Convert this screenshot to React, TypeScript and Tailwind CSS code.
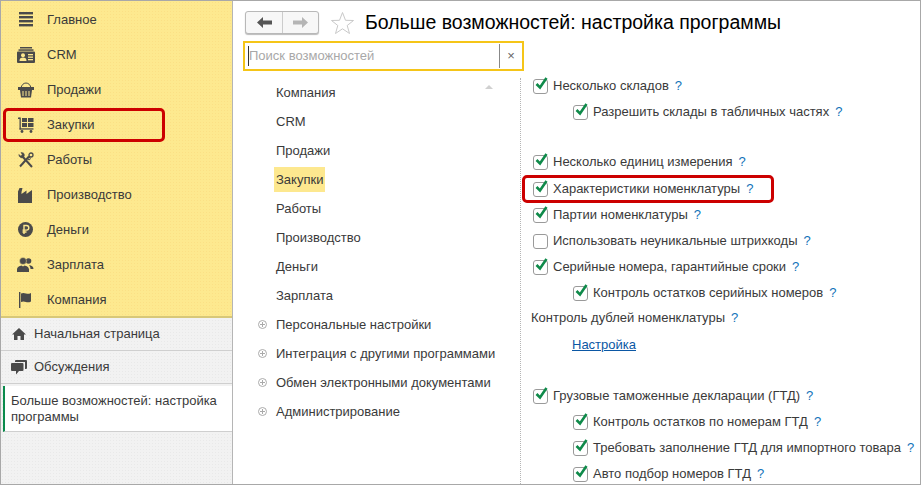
import React from "react";

const ink = "#4a4a4a";
const yellow = "#fde88f";

const MenuIcon = () => (
  <svg width="16" height="15" viewBox="0 0 16 15" fill={ink}>
    <rect x="1" y="0" width="14" height="2.4" />
    <rect x="1" y="4" width="14" height="2.4" />
    <rect x="1" y="8" width="14" height="2.4" />
    <rect x="1" y="12" width="14" height="2.4" />
  </svg>
);

const CrmIcon = () => (
  <svg width="18" height="16" viewBox="0 0 18 16" fill={ink}>
    <rect x="3" y="0" width="12" height="1.5" />
    <rect x="1.5" y="2.3" width="15" height="1.5" />
    <path d="M1 4.5h16a1 1 0 0 1 1 1V15a1 1 0 0 1-1 1H1a1 1 0 0 1-1-1V5.5a1 1 0 0 1 1-1z" />
    <circle cx="6" cy="8.2" r="2" fill={yellow} />
    <path d="M2.5 14c0-2.400 1.400-3.400 3.500-3.400s3.500 1 3.500 3.400z" fill={yellow} />
    <rect x="11" y="7" width="5" height="1.300" fill={yellow} />
    <rect x="11" y="9.500" width="5" height="1.300" fill={yellow} />
    <rect x="11" y="12" width="5" height="1.300" fill={yellow} />
  </svg>
);

const BasketIcon = () => (
  <svg width="16" height="16" viewBox="0 0 16 16" fill="none" stroke={ink}>
    <path d="M3 6C3.500 3 5.500 1 8 1s4.500 2 5 5" strokeWidth="1" />
    <rect x="0.500" y="5.500" width="15" height="2" fill={ink} />
    <path d="M2 8h12l-1 7.500H3z" fill={ink} stroke="none" />
    <path d="M5 9v5M8 9v5M11 9v5" stroke={yellow} />
  </svg>
);

const CartIcon = () => (
  <svg width="16" height="16" viewBox="0 0 16 16" fill={ink}>
    <rect x="0" y="0.500" width="2" height="1.500" />
    <rect x="1.500" y="0.500" width="1.300" height="12" />
    <rect x="4" y="1" width="5" height="4" />
    <rect x="10" y="1" width="5.500" height="4" />
    <rect x="4" y="6" width="5" height="4" />
    <rect x="10" y="6" width="5.500" height="4" />
    <rect x="1.500" y="11.300" width="14" height="1.300" />
    <circle cx="4" cy="14.500" r="1.400" />
    <circle cx="13" cy="14.500" r="1.400" />
  </svg>
);

const ToolsIcon = () => (
  <svg width="16" height="16" viewBox="0 0 16 16" fill="none" stroke={ink}>
    <path d="M4.500 4.500 14 15" strokeWidth="2" />
    <path d="M11 4.500 2 14.500" strokeWidth="2" />
    <path d="M0.800 2.500a3.200 3.200 0 0 0 4.700 3L6.500 3A3 3 0 0 0 3 0.500L4.300 2.800 2.800 4z" fill={ink} strokeWidth="0.500" />
    <circle cx="13" cy="3" r="2" strokeWidth="1.300" />
    <circle cx="11" cy="6.500" r="1.300" strokeWidth="1" />
  </svg>
);

const FactoryIcon = () => (
  <svg width="15" height="16" viewBox="0 0 15 16" fill={ink}>
    <path d="M0 16V4.500L1.500 1H4.500L3.500 5V7L8.500 3.500V7L14 3V16z" />
  </svg>
);

const RubleIcon = () => (
  <svg width="15" height="15" viewBox="0 0 15 15">
    <circle cx="7.500" cy="7.500" r="7.500" fill={ink} />
    <path d="M6 12V3.500h2.500a2.300 2.300 0 0 1 0 4.600H4.500M4.500 10H8.500" fill="none" stroke={yellow} strokeWidth="1.400" />
  </svg>
);

const PeopleIcon = () => (
  <svg width="17" height="15" viewBox="0 0 17 15" fill={ink}>
    <circle cx="11.500" cy="4" r="2.800" />
    <path d="M12 8c2.500.3 4.500 1.500 4.500 4h-3c0-1.500-.5-2.800-1.500-4z" />
    <circle cx="6" cy="4" r="3.500" stroke={yellow} strokeWidth="0.500" />
    <path d="M0 15v-2.500c0-2.500 2.500-3.500 4.500-4l1.500 1 1.500-1c2 .5 4.500 1.500 4.500 4V15z" />
  </svg>
);

const FlagIcon = () => (
  <svg width="13" height="16" viewBox="0 0 13 16" fill={ink}>
    <rect x="0" y="0" width="1.400" height="16" />
    <path d="M2 1.500c2-1 3.500-.5 5 0s3 .5 5-.5v8.500c-2 1-3.500 1-5 .5s-3-1-5 0z" />
  </svg>
);

const HomeIcon = () => (
  <svg width="14" height="12" viewBox="0 0 14 12" fill={ink}>
    <path d="M7 0 14 6.500H12V12H8.500V8h-3v4H2V6.500H0z" />
  </svg>
);

const ChatIcon = () => (
  <svg width="16" height="15" viewBox="0 0 16 15" fill={ink}>
    <path d="M5 0h10a1 1 0 0 1 1 1v7a1 1 0 0 1-1 1h-1V2H4V1a1 1 0 0 1 1-1z" />
    <path d="M1 3h10.500a1 1 0 0 1 1 1v6a1 1 0 0 1-1 1H8l-3 3.500V11H1a1 1 0 0 1-1-1V4a1 1 0 0 1 1-1z" />
  </svg>
);

const Check = ({ checked = true }: { checked?: boolean }) => (
  <span className="relative block h-[15px] w-[15px] shrink-0 rounded-[3px] border border-[#9a9a9a] bg-white">
    {checked && (
      <svg className="absolute -top-[4px] left-0" width="15" height="15" viewBox="0 0 15 15" fill="none">
        <path d="M2.500 8 6 11.500 12.500 2" stroke="#0f8a4a" strokeWidth="2.600" />
      </svg>
    )}
  </span>
);

const Option = ({
  text,
  indent,
  checked,
}: {
  text: string;
  indent?: boolean;
  checked?: boolean;
}) => (
  <div className={`flex h-[26px] items-center ${indent ? "pl-[40px]" : ""}`}>
    <Check checked={checked} />
    <span className="ml-[5px]">{text}</span>
    <span className="ml-[6px] text-[#1273b9]">?</span>
  </div>
);

const mainMenu: [React.ReactNode, string][] = [
  [<MenuIcon />, "Главное"],
  [<CrmIcon />, "CRM"],
  [<BasketIcon />, "Продажи"],
  [<CartIcon />, "Закупки"],
  [<ToolsIcon />, "Работы"],
  [<FactoryIcon />, "Производство"],
  [<RubleIcon />, "Деньги"],
  [<PeopleIcon />, "Зарплата"],
  [<FlagIcon />, "Компания"],
];

const sections = ["Компания", "CRM", "Продажи", "Закупки", "Работы", "Производство", "Деньги", "Зарплата"];
const groups = [
  "Персональные настройки",
  "Интеграция с другими программами",
  "Обмен электронными документами",
  "Администрирование",
];

export default function App() {
  return (
    <div className="relative flex h-[485px] w-[921px] overflow-hidden border border-[#a8a8a8] bg-white font-['Liberation_Sans',Arial,sans-serif] text-[13px] text-[#3a3a3a]">
      {/* sidebar */}
      <div className="flex w-[232px] shrink-0 flex-col border-r border-[#b5b5b5] bg-[#f2f2f2] bg-[radial-gradient(#e9e9e9_0.6px,transparent_0.9px)] bg-[length:3px_3px]">
        <div className="h-[317px] shrink-0 border-b-2 border-[#d8c878] bg-[#fde98f] bg-[radial-gradient(#fbe085_0.6px,transparent_0.9px)] bg-[length:3px_3px] pt-[1px]">
          {mainMenu.map(([icon, label]) => (
            <div key={label} className="flex h-[35px] items-center">
              <span className="flex w-[46px] shrink-0 justify-center pl-[3px]">{icon}</span>
              <span>{label}</span>
            </div>
          ))}
        </div>
        <div className="flex h-[33px] shrink-0 items-center border-b border-[#cfcfcf] pl-[11px]">
          <span className="flex w-[22px]">
            <HomeIcon />
          </span>
          Начальная страница
        </div>
        <div className="flex h-[33px] shrink-0 items-center border-b border-[#cfcfcf] pl-[10px]">
          <span className="flex w-[23px]">
            <ChatIcon />
          </span>
          Обсуждения
        </div>
        <div className="ml-[2px] mt-[2px] flex h-[46px] shrink-0 items-center border-b border-l-[2px] border-b-[#cfcfcf] border-l-[#0a8a4c] bg-white pl-[6px] leading-[16px]">
          Больше возможностей: настройка программы
        </div>
      </div>

      {/* content */}
      <div className="flex min-w-0 flex-1 flex-col">
        <div className="flex h-[40px] shrink-0 items-center pl-[12px] pt-[3px]">
          <div className="flex h-[23px] w-[74px] overflow-hidden rounded-[3px] border border-[#b8b8b8] bg-[#f7f7f7] shadow-[0_1px_1px_#bbb]">
            <span className="flex w-[37px] items-center justify-center border-r border-[#cccccc]">
              <svg width="15" height="11" viewBox="0 0 15 11" fill="#555555">
                <path d="M0 5.500 6 0V3.500H15V7.500H6V11z" />
              </svg>
            </span>
            <span className="flex flex-1 items-center justify-center">
              <svg width="15" height="11" viewBox="0 0 15 11" fill="#b5b5b5">
                <path d="M15 5.500 9 0V3.500H0V7.500H9V11z" />
              </svg>
            </span>
          </div>
          <svg className="ml-[11px]" width="25" height="24" viewBox="0 0 25 24" fill="none" stroke="#c9c9c9">
            <path d="M12.500 1.500 15.500 9.300 23.500 9.500 17.200 14.500 19.500 22.500 12.500 17.800 5.500 22.500 7.800 14.500 1.500 9.500 9.500 9.300z" />
          </svg>
          <span className="ml-[10px] text-[19.500px] text-black">Больше возможностей: настройка программы</span>
        </div>
        <div className="shrink-0 pl-[10px]">
          <div className="flex h-[30px] w-[281px] items-center border-2 border-[#f5c518] pl-[3px]">
            <span className="h-[20px] w-px bg-[#333333]" />
            <span className="text-[#a8a8a8]">Поиск возможностей</span>
            <span className="ml-auto flex h-[24px] w-[23px] items-center justify-center border-l border-[#888888] text-[#666666]">
              ×
            </span>
          </div>
        </div>
        <div className="flex min-h-0 flex-1">
          <div className="w-[287px] shrink-0 pl-[10px] pt-[7px]">
            <div className="relative">
              <span className="absolute right-[27px] top-[7px] h-0 w-0 border-x-[4px] border-b-[4px] border-x-transparent border-b-[#d0d0d0]" />
              {sections.map((s) => (
                <div key={s} className="flex h-[29px] items-center pl-[33px]">
                  <span className={s === "Закупки" ? "-mx-[2px] bg-[#fde88f] px-[2px] py-[3px]" : ""}>{s}</span>
                </div>
              ))}
              {groups.map((g) => (
                <div key={g} className="flex h-[29px] items-center pl-[15px]">
                  <svg className="mr-[9px]" width="9" height="9" viewBox="0 0 9 9" fill="none" stroke="#aaaaaa">
                    <circle cx="4.500" cy="4.500" r="4" />
                    <path d="M2 4.500H7M4.500 2V7" />
                  </svg>
                  {g}
                </div>
              ))}
            </div>
          </div>
          <div className="mt-[7px] min-w-0 flex-1 border-l border-dotted border-[#b5b5b5] pl-[12px]">
            <div className="-mt-[5px]">
              <Option text="Несколько складов" />
              <Option text="Разрешить склады в табличных частях" indent />
              <div className="h-[24px]" />
              <Option text="Несколько единиц измерения" />
              <div className="h-[1px]" />
              <Option text="Характеристики номенклатуры" />
              <Option text="Партии номенклатуры" />
              <Option text="Использовать неуникальные штрихкоды" checked={false} />
              <Option text="Серийные номера, гарантийные сроки" />
              <Option text="Контроль остатков серийных номеров" indent />
              <div className="-ml-[2px] flex h-[24px] items-center">
                Контроль дублей номенклатуры <span className="ml-[6px] text-[#1273b9]">?</span>
              </div>
              <div className="flex h-[28px] items-center pl-[39px] pt-[1px]">
                <span className="text-[#0b57a4] underline">Настройка</span>
              </div>
              <div className="h-[25px]" />
              <Option text="Грузовые таможенные декларации (ГТД)" />
              <Option text="Контроль остатков по номерам ГТД" indent />
              <Option text="Требовать заполнение ГТД для импортного товара" indent />
              <Option text="Авто подбор номеров ГТД" indent />
            </div>
          </div>
        </div>
      </div>

      {/* red annotation frames */}
      <div className="absolute left-[2px] top-[107px] h-[34px] w-[162px] rounded-[5px] border-[3px] border-[#cc0000]" />
      <div className="absolute left-[521px] top-[174px] h-[28px] w-[252px] rounded-[5px] border-[3px] border-[#cc0000]" />
    </div>
  );
}
